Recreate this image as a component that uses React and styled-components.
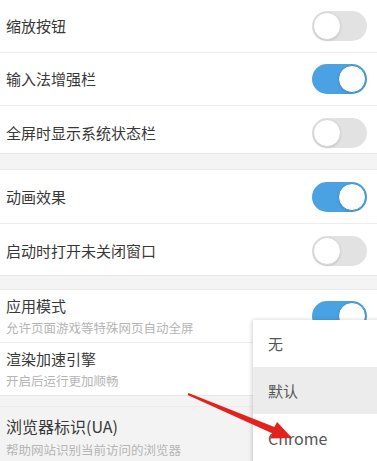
import React from "react"
import styled, { createGlobalStyle } from "styled-components"

const GlobalStyle = createGlobalStyle`
  body {
    margin: 0;
    background: #fff;
    font-family: "Noto Sans CJK SC", "Noto Sans", sans-serif;
  }
`

const Screen = styled.div`
  position: relative;
  width: 377px;
  height: 461px;
  overflow: hidden;
  background: #fff;
`

const Group = styled.div`
  display: flex;
  flex-direction: column;
  background: ${(p) => p.$bg || "#fff"};
  margin-top: ${(p) => p.$offset || 0}px;
`

const Row = styled.div`
  display: flex;
  align-items: center;
  justify-content: space-between;
  box-sizing: border-box;
  height: ${(p) => p.$h}px;
  padding: ${(p) => p.$pt || 0}px 10px 0 6px;
  border-bottom: ${(p) => (p.$last ? "none" : "1px solid #ededed")};
  background: ${(p) => p.$bg || "transparent"};
`

const TextBlock = styled.div`
  display: flex;
  flex-direction: column;
  gap: ${(p) => p.$gap || 4}px;
`

const Title = styled.div`
  font-size: ${(p) => p.$size || 15}px;
  line-height: ${(p) => (p.$size || 15) + 5}px;
  color: #383838;
`

const Sub = styled.div`
  font-size: 12.5px;
  line-height: 16px;
  color: #b5b5b5;
`

const Band = styled.div`
  height: ${(p) => p.$h}px;
  background: #f4f4f4;
  border-top: 1px solid #e6e6e6;
  border-bottom: 1px solid #ebebeb;
  box-sizing: border-box;
`

const Track = styled.div`
  position: relative;
  width: 55px;
  height: 30px;
  border-radius: 15px;
  background: ${(p) => (p.$on ? "#4aa2e2" : "#e2e2e2")};
  flex-shrink: 0;
`

const Knob = styled.div`
  position: absolute;
  top: 1px;
  left: ${(p) => (p.$on ? "26px" : "1px")};
  width: 28px;
  height: 28px;
  border-radius: 50%;
  background: #fff;
  box-sizing: border-box;
  border: 1px solid ${(p) => (p.$on ? "#3d8fc9" : "#d6d6d6")};
  box-shadow: 0 1px 2px rgba(0, 0, 0, 0.12);
`

const Menu = styled.div`
  position: absolute;
  left: 253px;
  top: 320px;
  width: 130px;
  height: 150px;
  background: #fff;
  box-shadow: -1px 0 4px rgba(0, 0, 0, 0.18);
  display: flex;
  flex-direction: column;
`

const MenuItem = styled.div`
  display: flex;
  align-items: center;
  height: 47px;
  padding-left: 15px;
  font-size: ${(p) => p.$size || 15}px;
  color: #555;
  font-family: "Noto Sans CJK SC", "Liberation Sans", sans-serif;
  background: ${(p) => (p.$active ? "#ececec" : "transparent")};
`

const Arrow = styled.svg`
  position: absolute;
  left: 0;
  top: 0;
  pointer-events: none;
`

const Toggle = ({ on }) => (
  <Track $on={on}>
    <Knob $on={on} />
  </Track>
)

const App = () => {
  return (
    <>
      <GlobalStyle />
      <Screen>
        <Group>
          <Row $h={53}>
            <Title>缩放按钮</Title>
            <Toggle />
          </Row>
          <Row $h={53}>
            <Title>输入法增强栏</Title>
            <Toggle on />
          </Row>
          <Row $h={47} $pt={7} $last>
            <Title>全屏时显示系统状态栏</Title>
            <Toggle />
          </Row>
        </Group>
        <Band $h={17} />
        <Group>
          <Row $h={54} $pt={1}>
            <Title>动画效果</Title>
            <Toggle on />
          </Row>
          <Row $h={51} $pt={3} $last>
            <Title>启动时打开未关闭窗口</Title>
            <Toggle />
          </Row>
        </Group>
        <Band $h={15} />
        <Group>
          <Row $h={53}>
            <TextBlock>
              <Title>应用模式</Title>
              <Sub>允许页面游戏等特殊网页自动全屏</Sub>
            </TextBlock>
            <Toggle on />
          </Row>
          <Row $h={52} $last>
            <TextBlock>
              <Title>渲染加速引擎</Title>
              <Sub>开启后运行更加顺畅</Sub>
            </TextBlock>
          </Row>
        </Group>
        <Band $h={12} />
        <Group $bg="#f3f3f3">
          <Row $h={60} $last>
            <TextBlock $gap={5}>
              <Title $size={16}>浏览器标识(UA)</Title>
              <Sub>帮助网站识别当前访问的浏览器</Sub>
            </TextBlock>
          </Row>
        </Group>

        <Menu>
          <MenuItem>无</MenuItem>
          <MenuItem $active>默认</MenuItem>
          <MenuItem $size={16}>Chrome</MenuItem>
        </Menu>

        <Arrow width="377" height="461" viewBox="0 0 377 461">
          <polygon
            points="188.4,393 274.4,427 277.1,421.9 292,438 270.1,438.5 272.6,433.4 187.6,395"
            fill="#e2221d"
          />
        </Arrow>
      </Screen>
    </>
  )
}

export default App
